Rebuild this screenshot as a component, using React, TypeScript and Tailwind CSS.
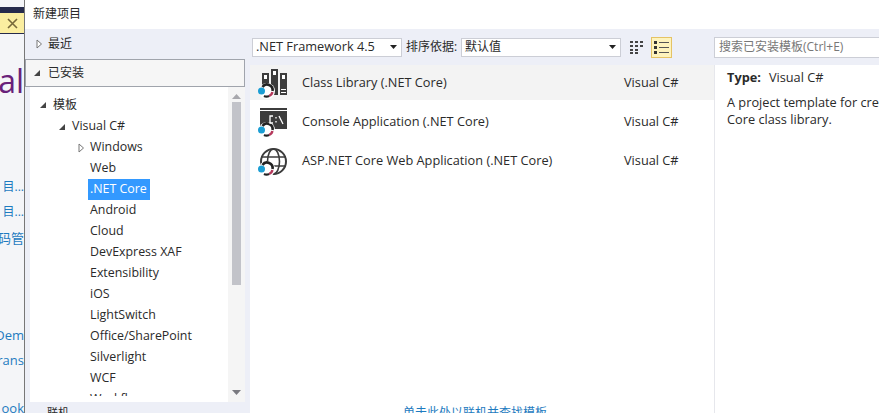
const FONT = "font-['Open_Sans','Noto_Sans_CJK_SC',sans-serif]";

const TREE_ITEMS = [
  "Web",
  ".NET Core",
  "Android",
  "Cloud",
  "DevExpress XAF",
  "Extensibility",
  "iOS",
  "LightSwitch",
  "Office/SharePoint",
  "Silverlight",
  "WCF",
  "Workflow",
];

const OpenArrow = () => (
  <svg width="8" height="8" viewBox="0 0 8 8" className="shrink-0">
    <path d="M7 1V7H1Z" fill="#444" />
  </svg>
);

const ClosedArrow = () => (
  <svg width="8" height="10" viewBox="0 0 8 10" className="shrink-0">
    <path d="M2 1L6.5 5L2 9Z" fill="#fff" stroke="#777" />
  </svg>
);

// ring + dot that sits on the lower left of every .NET Core template icon
const CoreBadge = () => (
  <g>
    <circle cx="11" cy="24" r="8" fill="#fff" />
    <path d="M6.5 20A5.5 5.5 0 0 1 16.5 24" fill="none" stroke="#222" strokeWidth="2.6" />
    <path d="M16.4 25A5.5 5.5 0 0 1 13 29" fill="none" stroke="#b5395c" strokeWidth="2.4" />
    <path d="M13 29A5.5 5.5 0 0 1 8 29" fill="none" stroke="#222" strokeWidth="2.4" />
    <circle cx="5.5" cy="24" r="3.5" fill="#1b9ed4" />
  </g>
);

const LibraryIcon = () => (
  <svg width="32" height="32" viewBox="0 0 32 32">
    <rect x="6" y="6" width="7" height="14" fill="#3c3c3c" />
    <rect x="8" y="8" width="3" height="4" fill="#fff" />
    <rect x="15" y="2" width="7" height="26" fill="#3c3c3c" />
    <rect x="17" y="4" width="3" height="4" fill="#fff" />
    <rect x="24" y="6" width="7" height="22" fill="#3c3c3c" />
    <rect x="26" y="8" width="3" height="4" fill="#fff" />
    <path d="M25 22.5H30M25 25.5H30" stroke="#fff" />
    <CoreBadge />
  </svg>
);

const ConsoleIcon = () => (
  <svg width="32" height="32" viewBox="0 0 32 32">
    <rect x="4" y="2" width="27" height="21" fill="#3c3c3c" />
    <path d="M4 4.5H31" stroke="#fff" />
    <CoreBadge />
    <path d="M17 10H14V17H17M20 11V12.5M20 15V16.5M23 10L27 18" fill="none" stroke="#fff" strokeWidth="1.3" />
  </svg>
);

const GlobeIcon = () => (
  <svg width="32" height="32" viewBox="0 0 32 32">
    <circle cx="17.5" cy="16.5" r="12.5" fill="none" stroke="#3c3c3c" strokeWidth="2" />
    <ellipse cx="17.5" cy="16.5" rx="6" ry="12.5" fill="none" stroke="#3c3c3c" strokeWidth="1.6" />
    <path d="M5 12H30M5 21H30" stroke="#3c3c3c" strokeWidth="1.6" />
    <CoreBadge />
  </svg>
);

const Caret = () => (
  <svg width="7" height="4" viewBox="0 0 7 4" className="shrink-0">
    <path d="M0 0H7L3.5 4Z" fill="#222" />
  </svg>
);

const TEMPLATES = [
  { name: "Class Library (.NET Core)", icon: <LibraryIcon />, active: true },
  { name: "Console Application (.NET Core)", icon: <ConsoleIcon />, active: false },
  { name: "ASP.NET Core Web Application (.NET Core)", icon: <GlobeIcon />, active: false },
];

const PageBehind = () => (
  <div className="w-[24px] shrink-0 h-full overflow-hidden bg-[#f4f5f8] flex flex-col items-end whitespace-nowrap text-[13px] text-[#1e7bc0]">
    <div className="w-full mt-[7px] h-[27px] bg-[#262b4c] pt-[6px] shrink-0">
      <div className="h-[20px] bg-[#fbeea0] flex items-center justify-center">
        <svg width="11" height="11" viewBox="0 0 11 11">
          <path d="M1 1L10 10M10 1L1 10" stroke="#77693a" strokeWidth="1.6" />
        </svg>
      </div>
    </div>
    <div className="mt-[27px] h-[40px] leading-[40px] text-[32px] text-[#68217a] shrink-0">ual</div>
    <div className="mt-[76px] h-[20px] leading-[20px] text-[12px] shrink-0">目...</div>
    <div className="mt-[5px] h-[20px] leading-[20px] text-[12px] shrink-0">目...</div>
    <div className="mt-[6px] h-[20px] leading-[20px] text-[13px] shrink-0">码管</div>
    <div className="mt-[77px] h-[20px] leading-[20px] shrink-0">Dem</div>
    <div className="mt-[5px] h-[20px] leading-[20px] shrink-0">rans</div>
    <div className="mt-[28px] h-[20px] leading-[20px] shrink-0">ook</div>
  </div>
);

const App = () => {
  return (
    <div className={`${FONT} w-[879px] h-[413px] overflow-hidden flex bg-white text-[12.75px] text-[#2a2a2a]`}>
      <PageBehind />

      {/* Dialog */}
      <div className="flex-1 min-w-0 h-full flex flex-col border-l border-[#777]">
        <div className="h-[29px] shrink-0 pl-[8px] pb-[2px] flex items-center text-[12px]">新建项目</div>

        <div className="flex-1 min-h-0 flex">
          {/* Sidebar */}
          <div className="w-[225px] shrink-0 flex flex-col bg-[#edeff7]">
            <div className="h-[30px] shrink-0 pl-[10px] flex items-center gap-[5px] text-[12px]">
              <ClosedArrow />
              <span>最近</span>
            </div>
            <div className="h-[28px] mr-[5px] shrink-0 bg-[#f6f6f6] border border-[#a0a4ac] pl-[7px] flex items-center gap-[7px] text-[12px]">
              <OpenArrow />
              <span>已安装</span>
            </div>
            <div className="flex-1 min-h-0 flex bg-white ml-[5px] mr-[5px]">
              <div className="flex-1 min-w-0 pt-[7px] text-[12.4px]">
                <div className="h-[302px] overflow-hidden">
                  <div className="h-[22px] pb-[1px] pl-[9px] flex items-center gap-[6px] text-[12px]">
                    <OpenArrow />
                    <span>模板</span>
                  </div>
                  <div className="h-[21px] pl-[28px] flex items-center gap-[6px]">
                    <OpenArrow />
                    <span>Visual C#</span>
                  </div>
                  <div className="h-[21px] pl-[47px] flex items-center gap-[5px]">
                    <ClosedArrow />
                    <span>Windows</span>
                  </div>
                  {TREE_ITEMS.map((item) => (
                    <div key={item} className="h-[21px] pl-[60px] flex items-center">
                      <span
                        className={
                          item === ".NET Core"
                            ? "h-[21px] flex items-center bg-[#3399ff] text-white pl-[2px] pr-[3px] -ml-[2px]"
                            : ""
                        }
                      >
                        {item}
                      </span>
                    </div>
                  ))}
                </div>
              </div>
              <div className="w-[17px] shrink-0 bg-[#f5f5f5] flex flex-col items-center pt-[7px] pb-[7px]">
                <svg width="9" height="5" viewBox="0 0 9 5" className="shrink-0">
                  <path d="M0 5L4.5 0L9 5Z" fill="#a8a8ad" />
                </svg>
                <div className="w-[9px] h-[183px] mt-[3px] bg-[#c2c3c9] shrink-0" />
                <div className="flex-1" />
                <svg width="9" height="5" viewBox="0 0 9 5" className="shrink-0">
                  <path d="M0 0H9L4.5 5Z" fill="#7a7a80" />
                </svg>
              </div>
            </div>
            <div className="h-[11px] shrink-0 pl-[22px] text-[11px] leading-[22px] overflow-hidden">联机</div>
          </div>

          {/* Main */}
          <div className="flex-1 min-w-0 flex flex-col">
            <div className="h-[36px] shrink-0 bg-[#edeff7] flex items-center pl-[2px]">
              <div className="w-[150px] h-[19px] bg-white border border-[#ccced6] flex items-center justify-between pl-[3px] pr-[4px]">
                <span>.NET Framework 4.5</span>
                <Caret />
              </div>
              <span className="ml-[4px] w-[55px] text-[12px]">排序依据:</span>
              <div className="w-[160px] h-[19px] bg-white border border-[#ccced6] flex items-center justify-between pl-[3px] pr-[4px] text-[12px]">
                <span>默认值</span>
                <Caret />
              </div>
              <div className="w-[30px] flex justify-center">
                <svg width="13" height="13" viewBox="0 0 13 13">
                  <path d="M0 1H3M5 1H8M10 1H13M0 5H3M5 5H8M10 5H13M0 9H3M5 9H8M0 12H3M5 12H8" stroke="#444" strokeWidth="2" />
                </svg>
              </div>
              <div className="w-[21px] h-[21px] bg-[#fdf3bd] border border-[#e5c365] flex items-center justify-center">
                <svg width="15" height="13" viewBox="0 0 15 13">
                  <path d="M0 1.5H3M0 6.5H3M0 11.5H3" stroke="#333" strokeWidth="3" />
                  <path d="M5 1.5H15M5 6.5H15M5 11.5H15" stroke="#555" />
                </svg>
              </div>
              <div className="ml-[42px] flex-1 h-[21px] bg-white border border-[#ccced6] border-r-0 pl-[4px] flex items-center text-[12px] text-[#777]">
                搜索已安装模板(Ctrl+E)
              </div>
            </div>

            <div className="flex-1 min-h-0 flex">
              <div className="w-[465px] shrink-0 flex flex-col border-r border-[#e6e7ec]">
                {TEMPLATES.map((t, i) => (
                  <div
                    key={t.name}
                    className={`${i === 0 ? "h-[35px]" : i === 1 ? "h-[39px] mt-[2px]" : "h-[39px]"} shrink-0 flex items-center pl-[6px] ${
                      t.active ? "bg-[#f3f3f3]" : ""
                    }`}
                  >
                    <span className="w-[46px] shrink-0 flex">{t.icon}</span>
                    <span className="w-[322px] shrink-0 whitespace-nowrap">{t.name}</span>
                    <span>Visual C#</span>
                  </div>
                ))}
                <div className="mt-auto h-[9px] overflow-hidden pr-[14px] text-center text-[12px] leading-[18px] text-[#1e7bc0]">
                  单击此处以联机并查找模板
                </div>
              </div>
              <div className="flex-1 min-w-0 overflow-hidden pl-[12px] pt-[4px] whitespace-nowrap leading-[17px]">
                <div className="h-[17px]">
                  <span className="font-bold">Type:</span>
                  <span className="ml-[8px]">Visual C#</span>
                </div>
                <div className="mt-[8px]">A project template for creating a .NET</div>
                <div>Core class library.</div>
              </div>
            </div>
          </div>
        </div>
      </div>
    </div>
  );
};

export default App;
